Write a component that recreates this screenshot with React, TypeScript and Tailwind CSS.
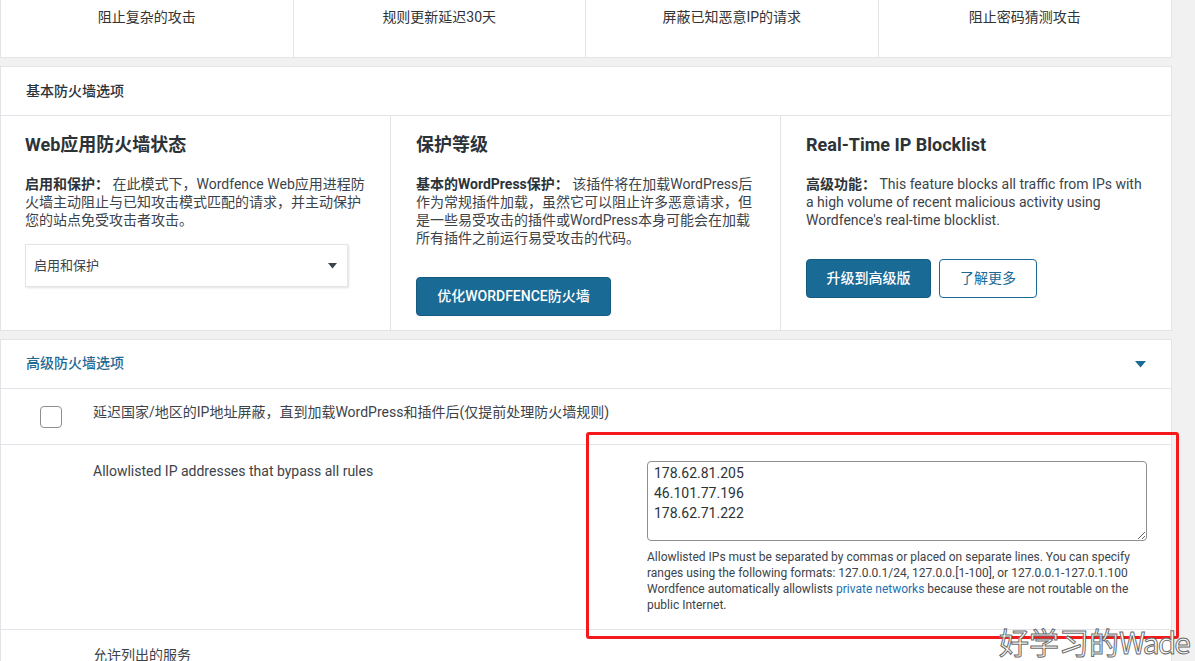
import React from "react";

const font = "font-['Roboto','Noto_Sans_CJK_SC',sans-serif]";

export default function App() {
  return (
    <div className={`relative w-[1195px] h-[661px] overflow-hidden bg-[#f1f1f1] text-[#2c3338] ${font}`}>
      <div className="w-[1172px] flex flex-col gap-[8px]">
        {/* top features card */}
        <div className="grid grid-cols-4 h-[58px] bg-white border border-t-0 border-[#e2e4e7]">
          {["阻止复杂的攻击", "规则更新延迟30天", "屏蔽已知恶意IP的请求", "阻止密码猜测攻击"].map((t, i) => (
            <div
              key={t}
              className={`text-center text-[14px] leading-[20px] pt-[7px] text-[#333] ${i < 3 ? "border-r border-[#e2e4e7]" : ""}`}
            >
              {t}
            </div>
          ))}
        </div>

        {/* basic firewall options */}
        <div className="bg-white border border-[#e2e4e7]">
          <div className="h-[49px] flex items-center px-[25px] border-b border-[#e2e4e7] text-[14px] font-medium text-[#2c3338]">
            基本防火墙选项
          </div>
          <div className="grid grid-cols-3 h-[214px]">
            <div className="border-r border-[#e2e4e7] pl-[24px] pr-[22px] pt-[17px]">
              <div className="text-[18px] leading-[24px] font-bold text-[#2c3338]">Web应用防火墙状态</div>
              <p className="mt-[18px] text-[14px] leading-[18px] text-[#3c434a]">
                <span className="font-bold text-[#2c3338]">启用和保护：</span> 在此模式下，Wordfence Web应用进程防火墙主动阻止与已知攻击模式匹配的请求，并主动保护您的站点免受攻击者攻击。
              </p>
              <div className="mt-[15px] w-[323px] h-[43px] bg-white border border-[#e5e5e5] shadow-[1px_1px_2px_rgba(0,0,0,0.12)] flex items-center justify-between pl-[8px] pr-[10px]">
                <span className="text-[13px] text-[#3c434a]">启用和保护</span>
                <svg width="9" height="6" viewBox="0 0 9 6">
                  <path d="M0 0 L9 0 L4.5 5.5 Z" fill="#3c434a" />
                </svg>
              </div>
            </div>
            <div className="border-r border-[#e2e4e7] pl-[25px] pr-[22px] pt-[17px]">
              <div className="text-[18px] leading-[24px] font-bold text-[#2c3338]">保护等级</div>
              <p className="mt-[18px] text-[14px] leading-[18px] text-[#3c434a]">
                <span className="font-bold text-[#2c3338]">基本的WordPress保护：</span> 该插件将在加载WordPress后作为常规插件加载，虽然它可以阻止许多恶意请求，但是一些易受攻击的插件或WordPress本身可能会在加载所有插件之前运行易受攻击的代码。
              </p>
              <button className="mt-[30px] w-[195px] h-[39px] rounded-[4px] bg-[#1a6a96] border border-[#155a80] text-white text-[14px] font-medium">
                优化WORDFENCE防火墙
              </button>
            </div>
            <div className="pl-[25px] pr-[24px] pt-[17px]">
              <div className="text-[18px] leading-[24px] font-bold text-[#2c3338]">Real-Time IP Blocklist</div>
              <p className="mt-[18px] text-[14px] leading-[18px] text-[#3c434a]">
                <span className="font-bold text-[#2c3338]">高级功能：</span> This feature blocks all traffic from IPs with a high volume of recent malicious activity using Wordfence's real-time blocklist.
              </p>
              <div className="mt-[30px] flex gap-[8px]">
                <button className="w-[125px] h-[39px] rounded-[4px] bg-[#1a6a96] border border-[#155a80] text-white text-[14px] font-medium">
                  升级到高级版
                </button>
                <button className="w-[98px] h-[39px] rounded-[4px] bg-white border border-[#1a6a96] text-[#1a6a96] text-[14px]">
                  了解更多
                </button>
              </div>
            </div>
          </div>
        </div>

        {/* advanced firewall options */}
        <div className="bg-white border border-[#e2e4e7]">
          <div className="h-[49px] flex items-center justify-between pl-[25px] pr-[25px] border-b border-[#e2e4e7]">
            <span className="text-[14px] font-medium text-[#1f6b96] -mt-[1px]">高级防火墙选项</span>
            <svg width="11" height="7" viewBox="0 0 11 7">
              <path d="M0 0 L11 0 L5.5 6.5 Z" fill="#1a6a96" />
            </svg>
          </div>
          <div className="h-[56px] flex items-center border-b border-[#e2e4e7]">
            <div className="ml-[39px] w-[22px] h-[22px] rounded-[4px] border border-[#8c8f94] bg-white" />
            <span className="ml-[31px] text-[14px] text-[#3c434a] -mt-[9px]">
              延迟国家/地区的IP地址屏蔽，直到加载WordPress和插件后(仅提前处理防火墙规则)
            </span>
          </div>
          <div className="flex h-[185px] border-b border-[#e2e4e7] pt-[16px]">
            <div className="pl-[92px] w-[646px] text-[14px] leading-[20px] text-[#3c434a]">
              Allowlisted IP addresses that bypass all rules
            </div>
            <div className="w-[500px]">
              <textarea
                readOnly
                defaultValue={"178.62.81.205\n46.101.77.196\n178.62.71.222"}
                className="block w-[500px] h-[80px] rounded-[4px] border border-[#8c8f94] px-[6px] py-[1px] text-[14px] leading-[20px] text-[#2c3338] outline-none"
              />
              <p className="mt-[8px] text-[12px] leading-[16px] text-[#3c434a] pr-[6px]">
                Allowlisted IPs must be separated by commas or placed on separate lines. You can specify ranges using the following formats: 127.0.0.1/24, 127.0.0.[1-100], or 127.0.0.1-127.0.1.100
                <br />
                Wordfence automatically allowlists <span className="text-[#2271b1]">private networks</span> because these are not routable on the public Internet.
              </p>
            </div>
          </div>
          <div className="h-[40px] pt-[15px] pl-[92px] text-[14px] leading-[20px] text-[#3c434a]">允许列出的服务</div>
        </div>
      </div>

      {/* red annotation */}
      <div className="absolute left-[586px] top-[432px] w-[593px] h-[207px] border-[3px] border-[#f5191b] rounded-[3px] pointer-events-none" />

      {/* watermark */}
      <div className="absolute left-[999px] top-[623px] whitespace-nowrap text-[30px] leading-[36px] text-white font-['Noto_Sans_CJK_SC',sans-serif] [-webkit-text-stroke:1px_#6b6b6b]">
        好学习的<span className="tracking-[-2px]">Wade</span>
      </div>
    </div>
  );
}
